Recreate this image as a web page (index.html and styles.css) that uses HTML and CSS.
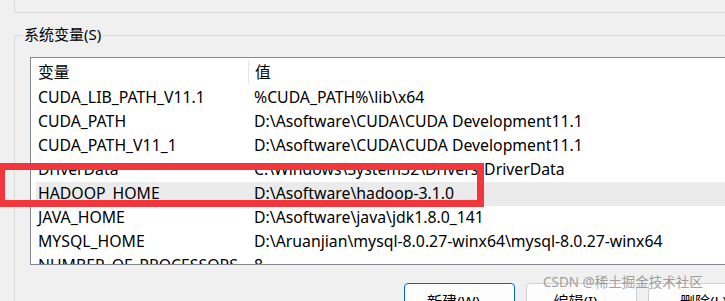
FILE: index.html
```html
<!DOCTYPE html>
<html lang="zh-CN">
<head>
  <meta charset="UTF-8" />
  <title>环境变量</title>
  <link rel="stylesheet" href="styles.css">
</head>
<body>
  <div class="prev-group"></div>

  <div class="group">
    <div class="group-label">系统变量(S)</div>

    <div class="list">
      <div class="row header">
        <div class="col-name">变量</div>
        <div class="col-value">值</div>
      </div>
      <div class="row"><div class="col-name">CUDA_LIB_PATH_V11.1</div><div class="col-value">%CUDA_PATH%\lib\x64</div></div>
      <div class="row"><div class="col-name">CUDA_PATH</div><div class="col-value">D:\Asoftware\CUDA\CUDA Development11.1</div></div>
      <div class="row"><div class="col-name">CUDA_PATH_V11_1</div><div class="col-value">D:\Asoftware\CUDA\CUDA Development11.1</div></div>
      <div class="row"><div class="col-name">DriverData</div><div class="col-value">C:\Windows\System32\Drivers\DriverData</div></div>
      <div class="row selected"><div class="col-name">HADOOP_HOME</div><div class="col-value">D:\Asoftware\hadoop-3.1.0</div></div>
      <div class="row"><div class="col-name">JAVA_HOME</div><div class="col-value">D:\Asoftware\java\jdk1.8.0_141</div></div>
      <div class="row"><div class="col-name">MYSQL_HOME</div><div class="col-value">D:\Aruanjian\mysql-8.0.27-winx64\mysql-8.0.27-winx64</div></div>
      <div class="row"><div class="col-name">NUMBER_OF_PROCESSORS</div><div class="col-value">8</div></div>
    </div>

    <div class="buttons">
      <button class="btn primary">新建(W)...</button>
      <button class="btn">编辑(I)...</button>
      <button class="btn">删除(L)</button>
    </div>
  </div>

  <div class="highlight-box"></div>
  <div class="watermark">CSDN @稀土掘金技术社区</div>
</body>
</html>
```

FILE: styles.css
```css
html, body {
  margin: 0;
  padding: 0;
  width: 725px;
  height: 301px;
  overflow: hidden;
}
body {
  position: relative;
  background-color: #f0f0f0;
  color: #000;
  font-family: "Noto Sans", "Noto Sans CJK SC", sans-serif;
  font-size: 15px;
}
.prev-group {
  margin-left: 14px;
  height: 12px;
  border-left: 1px solid #dcdcdc;
  border-bottom: 1px solid #dcdcdc;
}
.group {
  margin-top: 22px;
  margin-left: 14px;
  height: 265px;
  border-top: 1px solid #dcdcdc;
  border-left: 1px solid #dcdcdc;
}
.group-label {
  width: max-content;
  margin-top: -12px;
  margin-left: 8px;
  padding: 0 1px;
  line-height: 20px;
  background-color: #f0f0f0;
}
.list {
  margin-top: 13px;
  margin-left: 15px;
  width: 720px;
  height: 206px;
  border: 1px solid #828790;
  background-color: #fff;
  overflow: hidden;
  font-size: 15.8px;
}
.row {
  display: flex;
  height: 24px;
  line-height: 23px;
  margin-left: 5px;
  padding-left: 2px;
  white-space: nowrap;
}
.row.header {
  height: 28px;
  line-height: 28px;
}
.row.header .col-name {
  border-right: 1px solid #e5e5e5;
  margin: 2px 0;
  line-height: 24px;
}
.row.selected {
  background-color: #ebebeb;
}
.col-name {
  width: 210px;
  flex-shrink: 0;
}
.col-value {
  padding-left: 6px;
}
.buttons {
  display: flex;
  gap: 11px;
  margin-top: 18px;
  margin-left: 389px;
}
.btn {
  width: 111px;
  height: 30px;
  flex-shrink: 0;
  padding: 6px 0 0;
  font-family: "Noto Sans", "Noto Sans CJK SC", sans-serif;
  font-size: 15px;
  line-height: 20px;
  color: #000;
  background-color: #fdfdfd;
  border: 1px solid #d0d0d0;
  border-radius: 4px;
  text-align: center;
  vertical-align: top;
}
.btn.primary {
  border: 1px solid #0067c0;
}
.highlight-box {
  position: absolute;
  left: -2px;
  top: 163px;
  width: 472px;
  height: 30px;
  border: 7px solid #f2373c;
}
.watermark {
  position: absolute;
  left: 543px;
  top: 273px;
  font-size: 13.5px;
  line-height: 18px;
  color: rgba(120, 120, 120, 0.7);
  white-space: nowrap;
}
```
